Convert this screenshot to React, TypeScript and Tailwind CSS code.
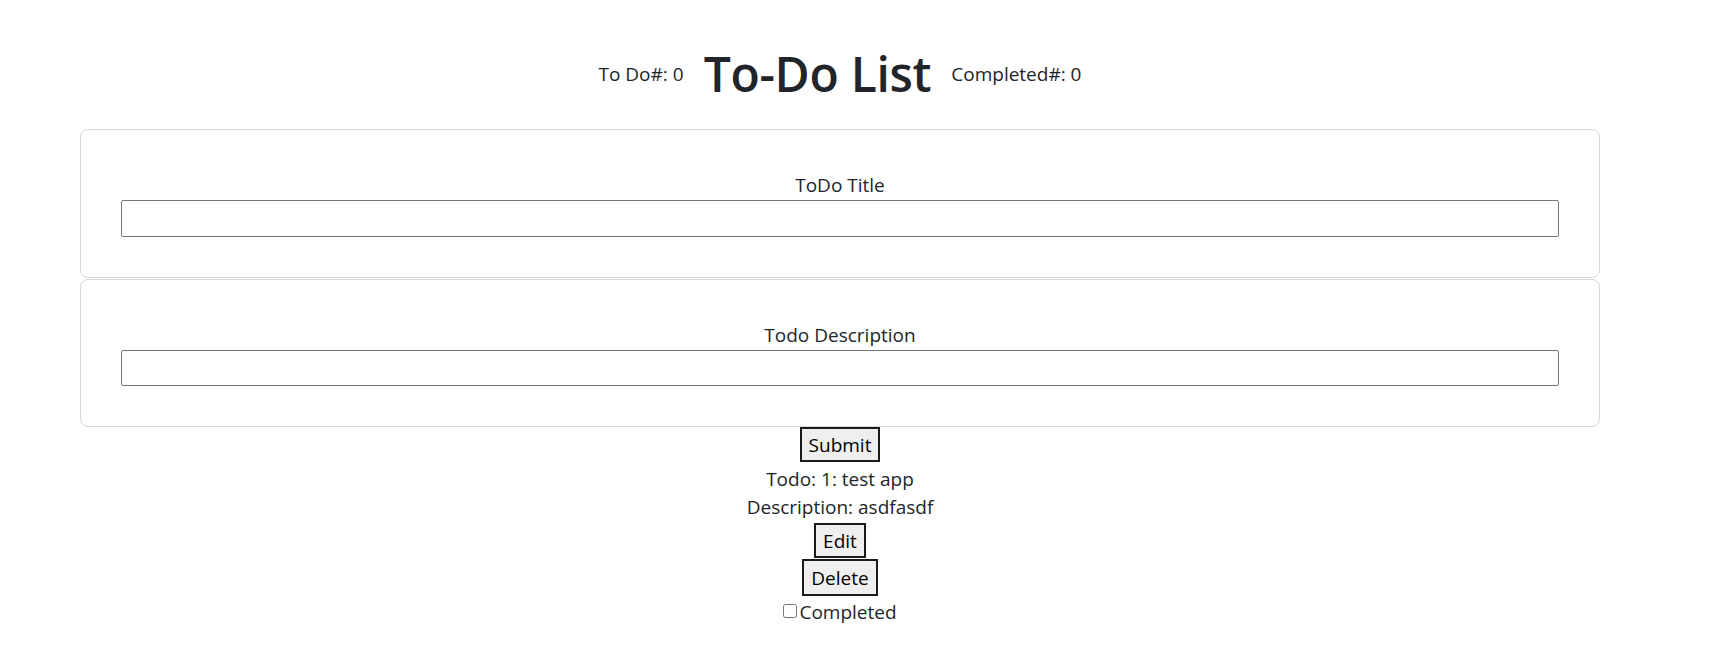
import React from "react";

export default function App() {
  const font = { fontFamily: '"Open Sans", "Noto Sans", sans-serif' };
  return (
    <div className="w-[1680px] bg-white text-[#212529] px-[80px] pt-[40px]" style={font}>
      <div className="flex items-center justify-center gap-[20px] h-[68px]">
        <span className="text-[19px] leading-[28px]">To Do#: 0</span>
        <h1 className="text-[48px] font-semibold leading-[60px] tracking-[-0.3px]">To-Do List</h1>
        <span className="text-[19px] leading-[28px]">Completed#: 0</span>
      </div>
      <div className="mt-[21px] flex flex-col">
        <div className="border border-[#d6d6d6] rounded-[8px] px-[40px] py-[40px] flex flex-col items-center">
          <label className="text-[19px] leading-[30px]">ToDo Title</label>
          <input className="w-full h-[37px] border border-[#767676] rounded-[2px] bg-white" />
        </div>
        <div className="mt-[1px] border border-[#d6d6d6] rounded-[8px] px-[40px] pt-[40px] pb-[40px] flex flex-col items-center">
          <label className="text-[19px] leading-[30px]">Todo Description</label>
          <input className="w-full h-[36px] border border-[#767676] rounded-[2px] bg-white" />
        </div>
      </div>
      <div className="flex flex-col items-center text-[19px]">
        <button className="h-[35px] px-[7px] border-2 border-[#1a1a1a] bg-[#efefef] leading-[28px] text-black">Submit</button>
        <div className="leading-[28px] mt-[3px]">Todo: 1: test app</div>
        <div className="leading-[28px]">Description: asdfasdf</div>
        <button className="mt-[2px] h-[35px] px-[7px] border-2 border-[#1a1a1a] bg-[#efefef] leading-[28px] text-black">Edit</button>
        <button className="mt-[1px] h-[37px] px-[7px] border-2 border-[#1a1a1a] bg-[#efefef] leading-[28px] text-black">Delete</button>
        <label className="mt-[2px] flex items-center leading-[28px]">
          <input type="checkbox" className="w-[14px] h-[14px] mr-[2px] mt-[-2px]" />
          Completed
        </label>
      </div>
    </div>
  );
}
